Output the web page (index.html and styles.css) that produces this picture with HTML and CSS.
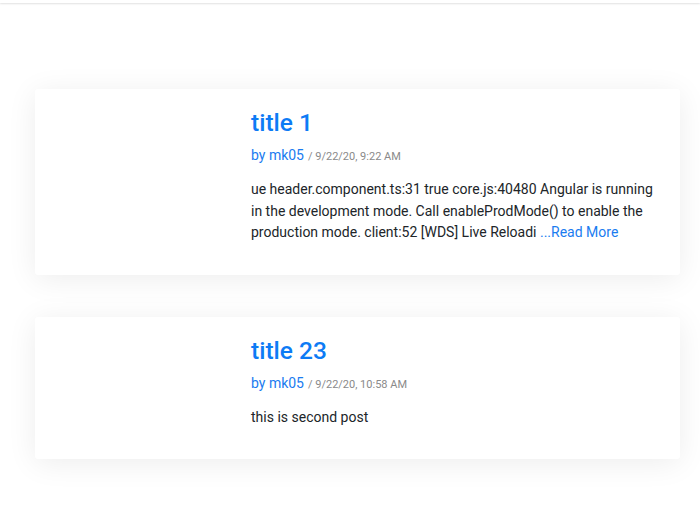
FILE: index.html
```html
<!DOCTYPE html>
<html>
<head>
<meta charset="utf-8">
<link rel="stylesheet" href="styles.css">
</head>
<body>
<div class="topbar"></div>
<main class="posts">
  <article class="card">
    <div class="thumb"></div>
    <div class="body">
      <h3 class="title">title 1</h3>
      <div class="meta"><span class="author">by mk05</span> <span class="date">/ 9/22/20, 9:22 AM</span></div>
      <p class="text">ue header.component.ts:31 true core.js:40480 Angular is running in the development mode. Call enableProdMode() to enable the production mode. client:52 [WDS] Live Reloadi <a class="more">...Read More</a></p>
    </div>
  </article>
  <article class="card">
    <div class="thumb"></div>
    <div class="body">
      <h3 class="title">title 23</h3>
      <div class="meta"><span class="author">by mk05</span> <span class="date">/ 9/22/20, 10:58 AM</span></div>
      <p class="text">this is second post</p>
    </div>
  </article>
</main>
</body>
</html>
```
FILE: styles.css
```css
html, body {
  margin: 0;
  padding: 0;
  background: #fff;
}
body {
  font-family: Roboto, "Noto Sans", sans-serif;
  color: #212529;
}
.topbar {
  height: 3px;
  background: #fff;
  box-shadow: 0 1px 2px rgba(0,0,0,0.12);
}
.posts {
  display: flex;
  flex-direction: column;
  gap: 42px;
  padding: 86px 20px 40px 35px;
}
.card {
  width: 645px;
  display: grid;
  grid-template-columns: 216px 1fr;
  background: #fff;
  border-radius: 3px;
  box-shadow: 0 4px 30px rgba(0,0,0,0.075);
}
.body {
  padding: 20px 18px 31px 0;
}
.title {
  margin: 0;
  font-size: 24.5px;
  font-weight: 500;
  line-height: 28px;
  color: #0d7bf5;
}
.meta {
  margin-top: 9px;
  line-height: 18px;
}
.author {
  font-size: 14px;
  color: #1a7cf0;
}
.date {
  font-size: 11px;
  color: #8a8a8a;
}
.text {
  margin: 13px 0 0;
  font-size: 14px;
  line-height: 21.5px;
}
.more {
  color: #1a7cf0;
  cursor: pointer;
}
```
